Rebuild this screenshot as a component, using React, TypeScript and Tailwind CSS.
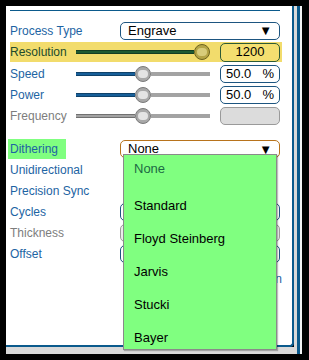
import React from 'react';

const font = { fontFamily: '"Liberation Sans", Tahoma, Arial, sans-serif' };

const Knob = ({ tone }: { tone: 'gray' | 'olive' }) => (
  <div
    className={
      tone === 'olive'
        ? 'w-4 h-4 rounded-full border border-[#6e6420] bg-[#b4a445] flex items-center justify-center shrink-0'
        : 'w-4 h-4 rounded-full border border-[#7a7a7a] bg-[#a8a8a8] flex items-center justify-center shrink-0'
    }
  >
    <div
      className={
        tone === 'olive'
          ? 'w-[10px] h-[8px] rounded-full bg-[#d8cc7a]'
          : 'w-[10px] h-[8px] rounded-full bg-[#e4e4e4]'
      }
    />
  </div>
);

const Slider = ({ fill, color, rest }: { fill: number; color: string; rest: boolean }) => (
  <div className="flex items-center w-[134px] h-4">
    <div className={`h-[4px] border-y border-black/30 ${color}`} style={{ width: fill }} />
    <Knob tone={color === 'bg-[#1e5a32]' ? 'olive' : 'gray'} />
    {rest && <div className="h-[4px] flex-1 bg-[#a3a3a3]" />}
  </div>
);

const ValueBox = ({ value, unit, kind }: { value?: string; unit?: string; kind: 'yellow' | 'blue' | 'off' }) => (
  <div
    className={
      kind === 'yellow'
        ? 'w-[60px] h-[19px] rounded-[5px] border border-[#2c5a36] bg-[#f4df70] flex items-center justify-center text-[13px] text-black'
        : kind === 'blue'
        ? 'w-[60px] h-[18px] rounded-[5px] border border-[#1d5580] bg-white flex items-center justify-between px-[5px] text-[13px] text-black'
        : 'w-[60px] h-[18px] rounded-[5px] border border-[#9a9a9a] bg-[#dcdcdc]'
    }
  >
    {value && <span>{value}</span>}
    {unit && <span>{unit}</span>}
  </div>
);

const Select = ({ value, border }: { value: string; border: string }) => (
  <div className={`w-[160px] h-[18px] rounded-[5px] border ${border} bg-white flex items-center justify-between pl-[7px] pr-[7px] text-[13px] text-black`}>
    <span>{value}</span>
    <span className="text-[13px] leading-none">▼</span>
  </div>
);

export default function App() {
  const ditherings = ['None', 'Standard', 'Floyd Steinberg', 'Jarvis', 'Stucki', 'Bayer'];

  return (
    <div className="w-[309px] h-[360px] bg-black pl-[6px] pt-[6px]" style={font}>
      <div className="flex w-[296px] h-[348px]">
        <div className="flex flex-col w-[288px]">
          <div className="relative w-[288px] h-[341px] bg-white border-r-2 border-b-2 border-[#0b5a8c] rounded-br-[4px] pt-[4px]">
            <div className="ml-[4px] w-[270px] h-px bg-[#0b5a8c]" />

            <div className="mt-[10px] flex items-center h-[19px] pl-[4px]">
              <span className="w-[110px] text-[12px] text-[#1d64a3]">Process Type</span>
              <Select value="Engrave" border="border-[#1d5580]" />
            </div>

            <div className="mt-[2px] ml-[4px] w-[272px] flex items-center h-[20px] bg-[#f2dc6c]">
              <span className="w-[66px] text-[12px] text-[#214a2c]">Resolution</span>
              <Slider fill={118} color="bg-[#1e5a32]" rest={false} />
              <div className="ml-[10px]"><ValueBox value="1200" kind="yellow" /></div>
            </div>

            <div className="mt-[1px] flex items-center h-[21px] pl-[4px]">
              <span className="w-[66px] text-[12px] text-[#1d64a3]">Speed</span>
              <Slider fill={59} color="bg-[#175f99]" rest />
              <div className="ml-[10px]"><ValueBox value="50.0" unit="%" kind="blue" /></div>
            </div>

            <div className="flex items-center h-[21px] pl-[4px]">
              <span className="w-[66px] text-[12px] text-[#1d64a3]">Power</span>
              <Slider fill={59} color="bg-[#175f99]" rest />
              <div className="ml-[10px]"><ValueBox value="50.0" unit="%" kind="blue" /></div>
            </div>

            <div className="flex items-center h-[21px] pl-[4px]">
              <span className="w-[66px] text-[12px] text-[#7d7d7d]">Frequency</span>
              <Slider fill={59} color="bg-[#a3a3a3]" rest />
              <div className="ml-[10px]"><ValueBox kind="off" /></div>
            </div>

            <div className="mt-[13px] flex items-center h-[20px] pl-[2px]">
              <span className="w-[58px] h-[20px] bg-[#80ff80] pl-[2px] flex items-center text-[12px] text-[#1d64a3]">Dithering</span>
              <div className="ml-[54px]">
                <Select value="None" border="border-[#b8731c]" />
              </div>
            </div>

            {['Unidirectional', 'Precision Sync'].map((l) => (
              <div key={l} className="flex items-center h-[21px] pl-[4px]">
                <span className="text-[12px] text-[#1d64a3]">{l}</span>
              </div>
            ))}

            {[
              { l: 'Cycles', c: 'text-[#1d64a3]', b: 'border-[#1d5580] bg-white' },
              { l: 'Thickness', c: 'text-[#7d7d7d]', b: 'border-[#9a9a9a] bg-[#ececec]' },
              { l: 'Offset', c: 'text-[#1d64a3]', b: 'border-[#1d5580] bg-white' },
            ].map((r) => (
              <div key={r.l} className="flex items-center h-[21px] pl-[4px]">
                <span className={`w-[110px] text-[12px] ${r.c}`}>{r.l}</span>
                <div className={`w-[160px] h-[18px] rounded-[5px] border ${r.b}`} />
              </div>
            ))}

            <div className="mt-[6px] w-[276px] text-right text-[12px] text-[#1d64a3]">Open</div>

            <div className="absolute left-[117px] top-[148px] w-[154px] h-[196px] bg-[#80ff80] border border-[#8a8a8a] shadow-[1px_1px_1px_rgba(0,0,0,0.25)] flex flex-col overflow-hidden">
              {ditherings.map((d, i) => (
                <div
                  key={d}
                  className={`${i === 0 ? 'h-[37px] text-[#1c6a44]' : 'h-[33px] text-black'} shrink-0 pt-[6px] pl-[10px] text-[13px] leading-[15px]`}
                >
                  {d}
                </div>
              ))}
            </div>
          </div>
          <div className="h-[7px] w-[288px] bg-[#d9d9d9]" />
        </div>
        <div className="w-[4px] h-[348px] bg-[#d9d9d9]" />
        <div className="w-[5px] h-[348px] bg-[#0b5a8c]" />
        <div className="w-[3px] h-[348px] bg-[#f2f2f2]" />
      </div>
    </div>
  );
}
